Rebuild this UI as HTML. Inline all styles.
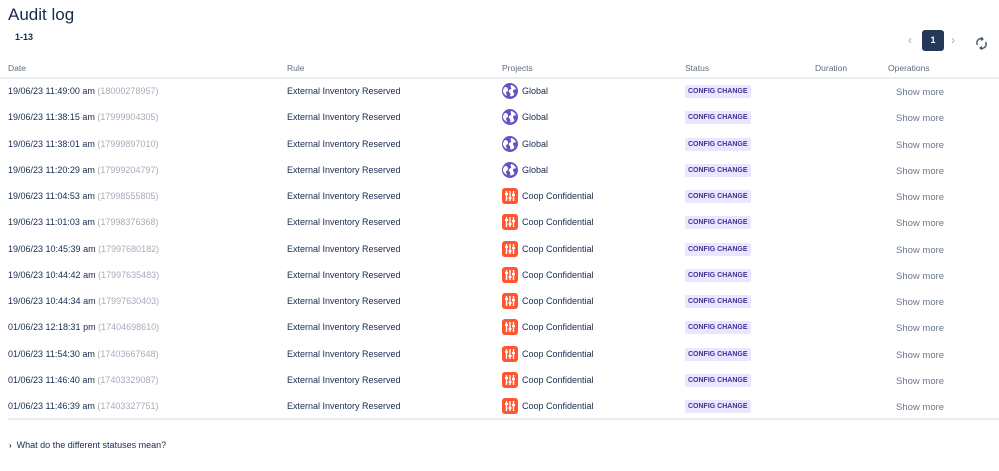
<!DOCTYPE html>
<html><head><style>
body{margin:0;width:999px;height:471px;background:#fff;font-family:"Liberation Sans",sans-serif;color:#172b4d;position:relative;overflow:hidden}
.a{position:absolute;white-space:nowrap}
h1{position:absolute;left:8px;top:5px;margin:0;font-size:17px;font-weight:normal;color:#172b4d}
.th{font-size:8.5px;color:#5e6c84;top:63px}
.row{position:absolute;left:0;width:999px;height:26px;font-size:9px}
.row span{position:absolute;top:0;line-height:26px;white-space:nowrap}
.g{color:#a5adba}
.lz{background:#eae6ff;color:#403294;font-weight:bold;font-size:7px;padding:1px 3px;line-height:11px!important;top:7px!important;border-radius:2px}
.sm{color:#6b778c;font-size:9.5px;top:2px!important}
.ic{width:16px;height:16px;top:5px!important;border-radius:3px}
</style></head><body>
<h1>Audit log</h1>
<div class="a" style="left:15px;top:32px;font-size:9px;font-weight:bold">1-13</div>
<div class="a" style="left:908px;top:33px;font-size:12px;color:#a5adba">‹</div>
<div class="a" style="left:922px;top:30px;width:22px;height:21px;background:#253858;border-radius:3px;color:#fff;font-size:9px;font-weight:bold;text-align:center;line-height:21px">1</div>
<div class="a" style="left:951px;top:33px;font-size:12px;color:#a5adba">›</div>
<svg class="a" style="left:975px;top:37px" width="13" height="13" viewBox="0 0 13 13" fill="none" stroke="#42526e" stroke-width="1.4"><path d="M2.5 8a4 4 0 0 1 1-5.5 4 4 0 0 1 4-0.5M10.5 5a4 4 0 0 1-1 5.5 4 4 0 0 1-4 .5"/><path d="M6 0.5l1.8 1.5-1.8 1.5M7 9.5l-1.8 1.5 1.8 1.5"/></svg>
<div class="a th" style="left:8px">Date</div>
<div class="a th" style="left:287px">Rule</div>
<div class="a th" style="left:502px">Projects</div>
<div class="a th" style="left:685px">Status</div>
<div class="a th" style="left:815px">Duration</div>
<div class="a th" style="left:888px">Operations</div>
<div class="a" style="left:0;top:77px;width:999px;height:2px;background:#ebecf0"></div>
<div id="rows"></div>
<div class="a" style="left:8px;top:418px;width:991px;height:2px;background:#ebecf0"></div>
<div class="a" style="left:9px;top:440px;font-size:9px"><b style="font-size:8px">›</b>&nbsp; What do the different statuses mean?</div>
<script>
var d=[["19/06/23 11:49:00 am","18000278957",1],["19/06/23 11:38:15 am","17999904305",1],["19/06/23 11:38:01 am","17999897010",1],["19/06/23 11:20:29 am","17999204797",1],["19/06/23 11:04:53 am","17998555805",0],["19/06/23 11:01:03 am","17998376368",0],["19/06/23 10:45:39 am","17997680182",0],["19/06/23 10:44:42 am","17997635483",0],["19/06/23 10:44:34 am","17997630403",0],["01/06/23 12:18:31 pm","17404698610",0],["01/06/23 11:54:30 am","17403667648",0],["01/06/23 11:46:40 am","17403329087",0],["01/06/23 11:46:39 am","17403327751",0]];
var globe='<svg class="ic" style="position:absolute;left:502px;top:5px" width="16" height="16" viewBox="0 0 16 16"><circle cx="8" cy="8" r="8" fill="#6554c0"/><path d="M3 4c2 0 3 1 3 3s-2 1-2 3l1 3c-2-1-4-3-4-5 0-2 1-3 2-4zM9 2c2 0 4 2 5 4-1 1-3 0-3 2s2 2 1 4c-1 1-3 2-4 1 1-2 0-3-1-4s1-3 2-3-1-2 0-4z" fill="#fff"/></svg>';
var coop='<span class="ic" style="left:502px;background:#ff5630;"><svg style="position:absolute;left:0;top:0" width="16" height="16" viewBox="0 0 16 16" stroke="#fff" stroke-width="1.4"><path d="M4.5 3v10M8 3v10M11.5 3v10"/><path d="M3 6h3M6.5 10h3M10 7h3" stroke-width="2"/></svg></span>';
var h='';d.forEach(function(r,i){var t=78+i*26.25;
h+='<div class="row" style="top:'+t+'px"><span style="left:8px">'+r[0]+' <span class="g" style="position:static">('+r[1]+')</span></span><span style="left:287px">External Inventory Reserved</span>'+(r[2]?globe:coop)+'<span style="left:522px">'+(r[2]?'Global':'Coop Confidential')+'</span><span class="lz" style="left:685px">CONFIG CHANGE</span><span class="sm" style="left:896px">Show more</span></div>';});
document.getElementById('rows').innerHTML=h;
</script>
</body></html>
